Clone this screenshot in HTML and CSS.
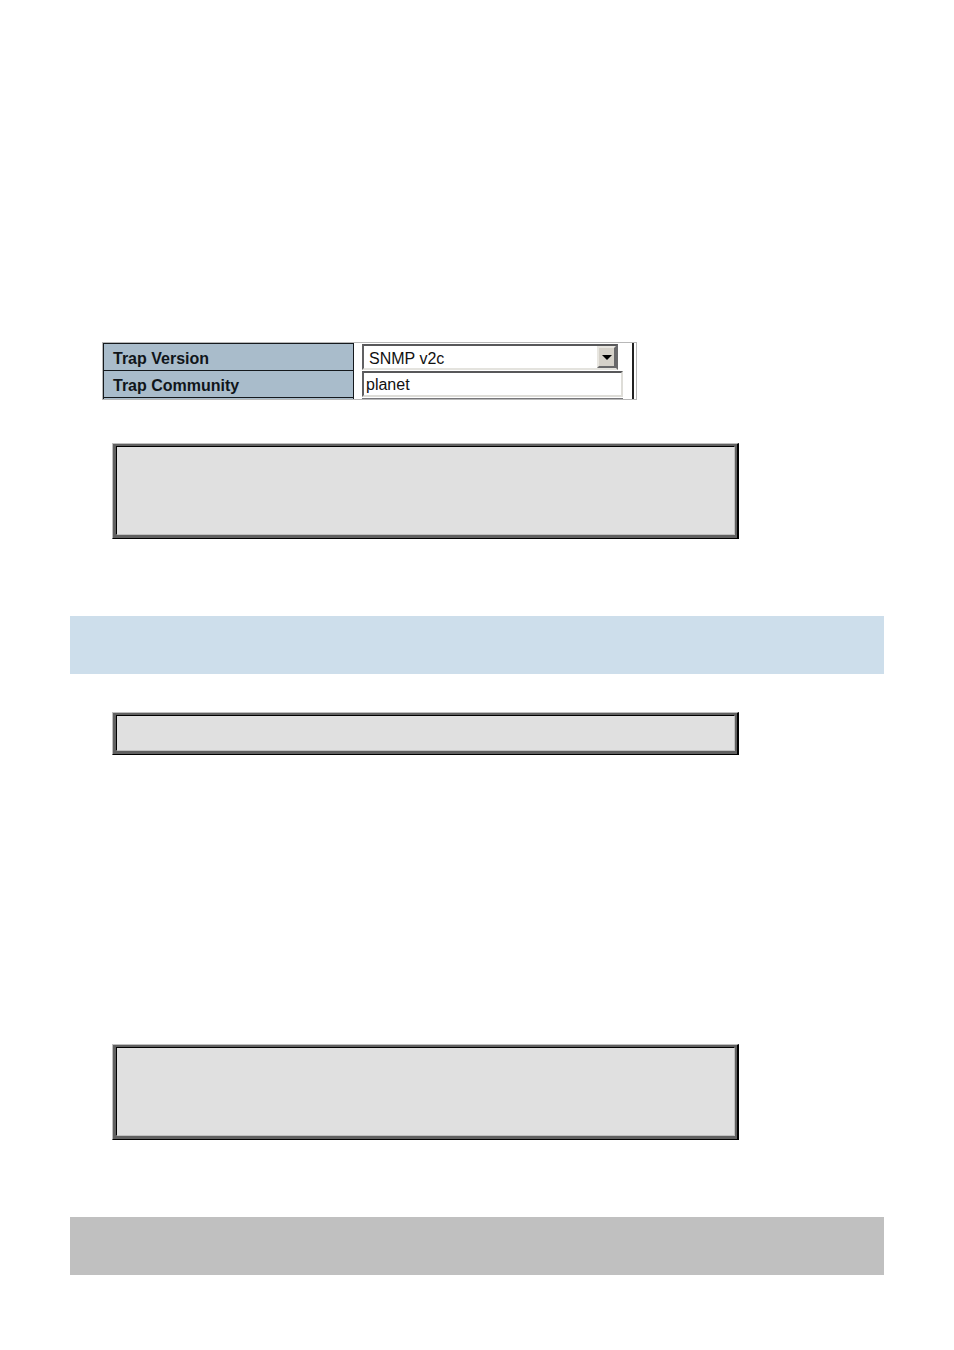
FILE: index.html
```html
<!DOCTYPE html>
<html lang="en">
<head>
<meta charset="utf-8">
<title>SNMP Trap Configuration</title>
<link rel="stylesheet" href="styles.css">
</head>
<body>
<main class="page">
  <form class="trap-form">
    <label class="label" for="version">Trap Version</label>
    <div class="field">
      <div class="select-box">
        <select id="version" class="select"><option>SNMP v2c</option></select>
        <span class="arrow" aria-hidden="true"><svg width="10" height="5" viewBox="0 0 10 5"><path d="M0 0H10L5 5Z"/></svg></span>
      </div>
    </div>
    <label class="label" for="community">Trap Community</label>
    <div class="field"><input id="community" class="input" type="text" value="planet"></div>
    <div class="label"></div>
    <div class="field"><div class="next-input"></div></div>
  </form>
  <div class="box"></div>
  <div class="band band-blue"></div>
  <div class="box box-short"></div>
  <div class="box box-last"></div>
  <div class="band band-gray"></div>
</main>
</body>
</html>
```
FILE: styles.css
```css
*, *::before { box-sizing: border-box; }

body {
  margin: 0;
  background: #fff;
  color: #111;
  font-family: "Liberation Sans", Arial, sans-serif;
  font-size: 16px;
}

.page {
  display: flex;
  flex-direction: column;
  padding: 342px 70px 75px;
}

.trap-form {
  display: grid;
  grid-template-columns: 251px 1fr;
  grid-template-rows: 27px 27px 2px;
  width: 100%;
  max-width: 535px;
  margin-left: 32px;
  padding-right: 2px;
  border: 1px solid #b8b8b8;
}

.label {
  padding-left: 9px;
  border: solid #15191d;
  border-width: 1px 1px 0;
  background: #a9bccb;
  color: #10151a;
  font-weight: bold;
  line-height: 29px;
}

.field {
  padding: 1px 9px 0 8px;
  border-right: 2px solid #222;
}

.select-box {
  display: flex;
  height: 26px;
  margin-right: 5px;
  border: 2px solid;
  border-color: #58585a #69696b #e4e3de #606062;
}

.select {
  flex: 1;
  min-width: 0;
  padding: 2px 0 0 5px;
  border: 0;
  border-radius: 0;
  appearance: none;
  background: #fff;
  color: #111;
  font: inherit;
}

.arrow {
  display: grid;
  place-items: center;
  width: 19px;
  border: 2px solid;
  border-color: #e8e6e0 #68686a #68686a #e8e6e0;
  background: #d5d1c9;
}

.input {
  display: block;
  width: 100%;
  height: 26px;
  padding: 2px 0 0 2px;
  border: 2px solid;
  border-color: #58585a #deddd8 #deddd8 #606062;
  border-radius: 0;
  background: #fff;
  color: #111;
  font: inherit;
}

.next-input {
  height: 1px;
  background: #77777a;
}

.box {
  width: 100%;
  max-width: 627px;
  height: 96px;
  margin: 43px 0 0 42px;
  border: 1px solid;
  border-color: #c0c0c0 #000 #000 #c0c0c0;
  border-right-width: 2px;
  background: #606060;
  padding: 2px 2px 3px 3px;
}

.box::before {
  content: "";
  display: block;
  height: 100%;
  border: 1px solid;
  border-color: #000 #c0c0c0 #c0c0c0 #000;
  background: #e0e0e0;
}

.band { height: 58px; }

.band-blue {
  margin-top: 77px;
  background: #cddeeb;
}

.band-gray {
  margin-top: 77px;
  background: #c0c0c0;
}

.box-short {
  height: 43px;
  margin-top: 38px;
}

.box-last { margin-top: 289px; }
```
